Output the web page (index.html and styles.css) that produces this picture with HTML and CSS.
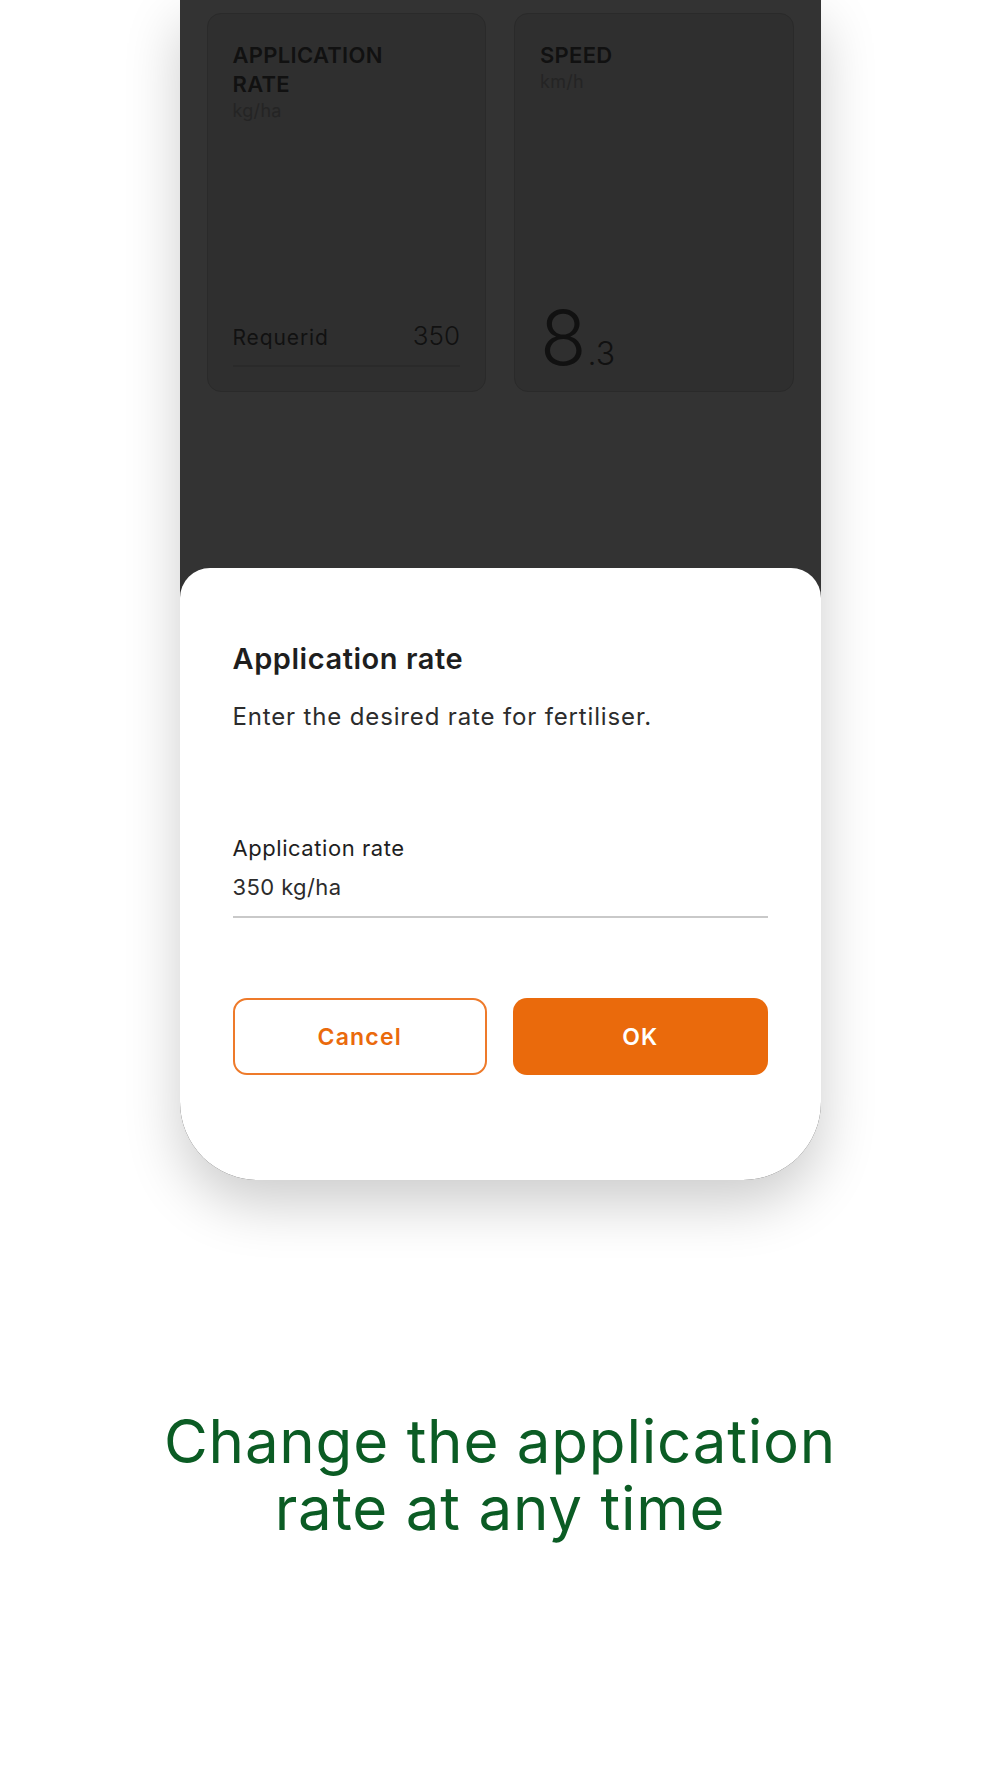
FILE: index.html
```html
<!DOCTYPE html>
<html lang="en">
<head>
    <meta charset="UTF-8">
    <meta name="viewport" content="width=device-width, initial-scale=1.0">
    <title>Application rate</title>
    <link rel="stylesheet" href="styles.css">
</head>
<body>
    <div class="stage">
        <div class="phone">
            <div class="tiles">
                <div class="tile">
                    <div class="tile-title">APPLICATION<br>RATE</div>
                    <div class="tile-unit">kg/ha</div>
                    <div class="tile-foot">
                        <span class="req-label">Requerid</span>
                        <span class="req-value">350</span>
                    </div>
                </div>
                <div class="tile">
                    <div class="tile-title">SPEED</div>
                    <div class="tile-unit">km/h</div>
                    <div class="speed"><span class="speed-int">8</span><span class="speed-dec">.3</span></div>
                </div>
            </div>

            <div class="sheet">
                <h2 class="sheet-title">Application rate</h2>
                <p class="sheet-text">Enter the desired rate for fertiliser.</p>
                <div class="field">
                    <label class="field-label">Application rate</label>
                    <div class="field-value">350 kg/ha</div>
                </div>
                <div class="actions">
                    <button class="btn btn-outline">Cancel</button>
                    <button class="btn btn-solid">OK</button>
                </div>
            </div>
        </div>

        <h1 class="caption">Change the application<br>rate at any time</h1>
    </div>
</body>
</html>
```

FILE: styles.css
```css
body {
    margin: 0;
    background-color: #fff;
    font-family: Inter, "Noto Sans", sans-serif;
}
.stage {
    height: 1778px;
    overflow: hidden;
}
.phone {
    width: 641px;
    height: 1180px;
    margin: 0 auto;
    background-color: #333;
    border-radius: 0 0 78px 78px;
    overflow: hidden;
    box-shadow: 0 24px 56px rgba(0, 0, 0, 0.2);
    display: flex;
    flex-direction: column;
}
.tiles {
    display: grid;
    grid-template-columns: 1fr 1fr;
    gap: 28px;
    padding: 13px 27px 0 27px;
}
.tile {
    height: 379px;
    box-sizing: border-box;
    background-color: #2f2f2f;
    border: 1px solid #2a2a2a;
    border-radius: 14px;
    padding: 27px 25px 24px 25px;
    display: flex;
    flex-direction: column;
    color: #111;
}
.tile-title {
    font-size: 22px;
    line-height: 29px;
    font-weight: 600;
    letter-spacing: 0.3px;
}
.tile-unit {
    font-size: 18px;
    line-height: 24px;
    color: #242424;
    letter-spacing: 0.3px;
}
.tile-foot {
    margin-top: auto;
    display: flex;
    justify-content: space-between;
    align-items: baseline;
    padding-bottom: 14px;
    border-bottom: 2px solid #2a2a2a;
}
.req-label {
    font-size: 21px;
    letter-spacing: 0.9px;
}
.req-value {
    font-size: 26px;
    font-weight: 300;
}
.speed {
    margin-top: auto;
    line-height: 1;
    margin-bottom: -8px;
}
.speed-int {
    font-size: 76px;
    font-weight: 300;
    letter-spacing: 1px;
}
.speed-dec {
    font-size: 32px;
    font-weight: 300;
}
.sheet {
    margin-top: auto;
    height: 612px;
    box-sizing: border-box;
    background-color: #fff;
    border-radius: 30px 30px 0 0;
    padding: 73px 53px 0 53px;
}
.sheet-title {
    margin: 0;
    font-size: 29px;
    line-height: 36px;
    font-weight: 600;
    color: #1e1e1e;
    letter-spacing: 0.55px;
}
.sheet-text {
    margin: 25px 0 0 0;
    font-size: 24px;
    line-height: 30px;
    color: #2c2c2c;
    letter-spacing: 0.85px;
}
.field {
    margin-top: 102px;
    padding-bottom: 15px;
    border-bottom: 2px solid #c9c9c9;
}
.field-label {
    display: block;
    font-size: 22px;
    line-height: 28px;
    color: #1e1e1e;
    letter-spacing: 0.55px;
}
.field-value {
    margin-top: 11px;
    font-size: 22px;
    line-height: 28px;
    color: #2c2c2c;
    letter-spacing: 0.4px;
}
.actions {
    display: grid;
    grid-template-columns: 1fr 1fr;
    gap: 26px;
    margin-top: 80px;
}
.btn {
    height: 77px;
    border-radius: 14px;
    font-family: inherit;
    font-size: 23px;
    font-weight: 600;
    letter-spacing: 1.2px;
    cursor: pointer;
}
.btn-outline {
    background: #fff;
    color: #ea6a0c;
    border: 2px solid #ee7a2a;
}
.btn-solid {
    background: #ea6a0c;
    color: #fff;
    border: none;
}
.caption {
    margin: 228px 0 0 0;
    text-align: center;
    font-size: 60px;
    line-height: 67px;
    font-weight: 400;
    color: #0b5c24;
    letter-spacing: 0.8px;
}
```
